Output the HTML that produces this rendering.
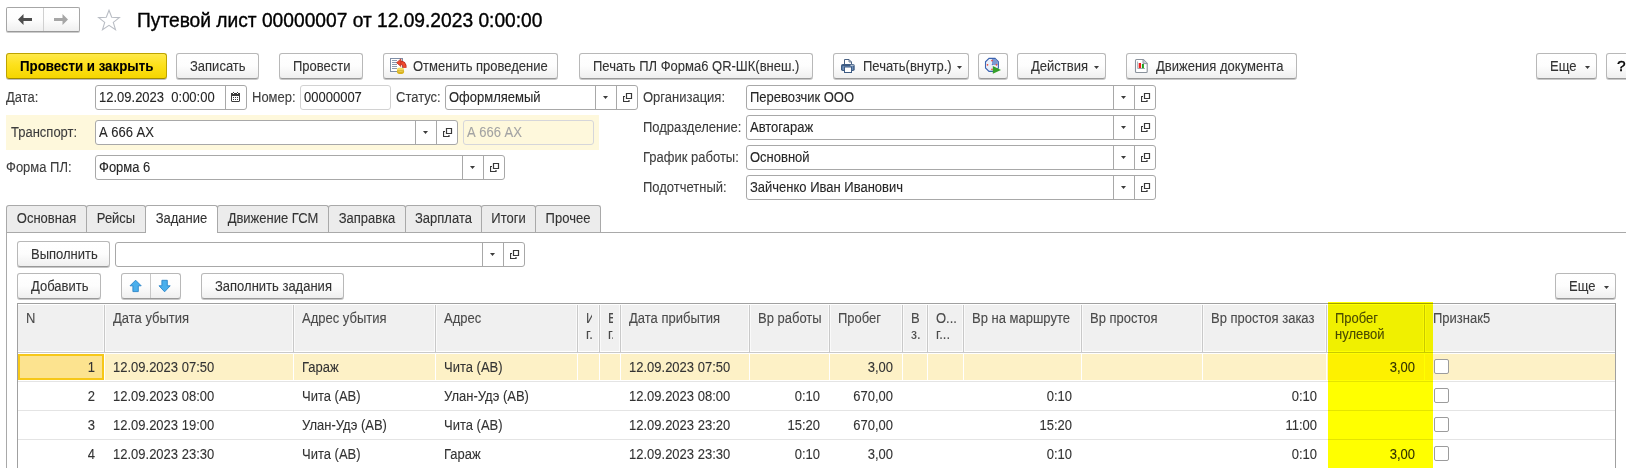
<!DOCTYPE html><html><head><meta charset="utf-8"><style>
html,body{margin:0;padding:0;}
body{width:1626px;height:468px;overflow:hidden;position:relative;background:#fff;font-family:"Liberation Sans", sans-serif;}
.t{position:absolute;white-space:pre;line-height:16px;transform:scaleY(1.08);transform-origin:0 12.5px;-webkit-text-stroke:0.1px currentColor;}
.btn{position:absolute;border:1px solid #b8b8b8;border-bottom-color:#999;border-radius:3px;background:linear-gradient(#ffffff 0%,#fdfdfd 50%,#efefef 100%);box-shadow:0 1px 0 rgba(0,0,0,0.22);}
.ybtn{position:absolute;border:1px solid #bda300;border-bottom-color:#a08a00;border-radius:3px;background:linear-gradient(#ffe94a 0%,#fde11c 45%,#f5d600 100%);box-shadow:0 1px 0 rgba(0,0,0,0.25);}
.fld{position:absolute;border:1px solid #a8a8a8;border-radius:3px;background:#fff;}
.vl{position:absolute;width:1px;background:#a8a8a8;}
.arr{position:absolute;width:0;height:0;border-left:3px solid transparent;border-right:3px solid transparent;border-top:4px solid #444;}
.ic{position:absolute;}
.abs{position:absolute;}
</style></head><body>
<div class="btn" style="left:6px;top:7px;width:72px;height:23px;border-color:#a6a6a6;border-bottom-color:#999;border-radius:2px;box-shadow:0 1px 0 rgba(0,0,0,0.2)"></div><div class="vl" style="left:43px;top:8px;height:23px;background:#d0d0d0"></div><svg class="ic" style="left:18px;top:14px" width="15" height="11" viewBox="0 0 15 11"><path d="M0 5.5L5.5 0V4H14V7H5.5V11Z" fill="#4d4d4d"/></svg><svg class="ic" style="left:53px;top:14px" width="15" height="11" viewBox="0 0 15 11"><path d="M15 5.5L9.5 0V4H1V7H9.5V11Z" fill="#a6a6a6"/></svg><svg class="ic" style="left:97px;top:9px" width="24" height="23" viewBox="0 0 24 23"><path d="M12 1.3L14.7 8.3L22.4 8.6L16.3 13.4L18.5 20.6L12 16.4L5.5 20.6L7.7 13.4L1.6 8.6L9.3 8.3Z" fill="none" stroke="#b9bdc4" stroke-width="1.1"/></svg><div class="t" style="left:137px;top:11px;font-size:19.2px;color:#000;line-height:20px;-webkit-text-stroke:0.35px #000;transform:scaleY(1.03);transform-origin:0 16px">Путевой лист 00000007 от 12.09.2023 0:00:00</div><div class="ybtn" style="left:6px;top:53px;width:159px;height:24px"></div><div class="t" style="left:20px;top:59px;font-size:13.3px;color:#000;font-weight:bold">Провести и закрыть</div><div class="btn" style="left:176px;top:53px;width:81px;height:24px"></div><div class="t" style="left:190px;top:59px;font-size:13px;color:#333;font-weight:normal;">Записать</div><div class="btn" style="left:279px;top:53px;width:82px;height:24px"></div><div class="t" style="left:293px;top:59px;font-size:13px;color:#333;font-weight:normal;">Провести</div><div class="btn" style="left:383px;top:53px;width:173px;height:24px"></div><div class="t" style="left:413px;top:59px;font-size:13px;color:#333;font-weight:normal;">Отменить проведение</div><div class="btn" style="left:579px;top:53px;width:232px;height:24px"></div><div class="t" style="left:593px;top:59px;font-size:13px;color:#333;font-weight:normal;">Печать ПЛ Форма6 QR-ШК(внеш.)</div><div class="btn" style="left:833px;top:53px;width:134px;height:24px"></div><div class="t" style="left:863px;top:59px;font-size:13px;color:#333;font-weight:normal;">Печать(внутр.)</div><svg class="ic" style="left:957px;top:66px" width="5" height="3" viewBox="0 0 5 3"><path d="M0 0H5L2.5 3Z" fill="#3c3c3c"/></svg><div class="btn" style="left:978px;top:53px;width:28px;height:24px"></div><div class="btn" style="left:1017px;top:53px;width:87px;height:24px"></div><div class="t" style="left:1031px;top:59px;font-size:13px;color:#333;font-weight:normal;">Действия</div><svg class="ic" style="left:1094px;top:66px" width="5" height="3" viewBox="0 0 5 3"><path d="M0 0H5L2.5 3Z" fill="#3c3c3c"/></svg><div class="btn" style="left:1126px;top:53px;width:169px;height:24px"></div><div class="t" style="left:1156px;top:59px;font-size:13px;color:#333;font-weight:normal;">Движения документа</div><div class="btn" style="left:1536px;top:53px;width:59px;height:24px"></div><div class="t" style="left:1550px;top:59px;font-size:13px;color:#333;font-weight:normal;">Еще</div><svg class="ic" style="left:1585px;top:66px" width="5" height="3" viewBox="0 0 5 3"><path d="M0 0H5L2.5 3Z" fill="#3c3c3c"/></svg><div class="btn" style="left:1606px;top:53px;width:33px;height:24px"></div><div class="t" style="left:1617px;top:58px;font-size:15.5px;color:#000;font-weight:normal;transform:none;-webkit-text-stroke:0.4px #000">?</div><svg class="ic" style="left:386px;top:54px" width="24" height="24" viewBox="0 0 24 24">
<rect x="4.5" y="4.5" width="12" height="13" fill="#fff" stroke="#7f8ea6" stroke-width="1"/>
<path d="M6 6.5h5M6 8.5h5M6 10.5h5M6 12.5h5M6 14.5h5" stroke="#8d9bb0" stroke-width="1"/>
<ellipse cx="14.5" cy="17.5" rx="3.6" ry="2.6" fill="#d9b31c"/>
<ellipse cx="14.5" cy="15.8" rx="3.6" ry="2.2" fill="#f3dc63"/>
<path d="M11 16.8h7" stroke="#c9a11a" stroke-width="0.8"/>
<path d="M14 8.6C17.3 8.6 18.6 10 18.6 13.8" fill="none" stroke="#b5281c" stroke-width="4"/>
<path d="M14 8.6C17.3 8.6 18.6 10 18.6 13.8" fill="none" stroke="#f04a2e" stroke-width="2.7"/>
<path d="M10.6 8.7L14.9 4.9V12.5Z" fill="#f04a2e" stroke="#b5281c" stroke-width="0.7"/>
</svg><svg class="ic" style="left:836px;top:54px" width="24" height="24" viewBox="0 0 24 24">
<path d="M8.5 5.5h4.5l2.5 2.5v3h-7z" fill="#fff" stroke="#4a6283" stroke-width="1"/>
<path d="M13 5.5v2.5h2.5" fill="none" stroke="#4a6283" stroke-width="0.8"/>
<rect x="5" y="10" width="13.7" height="7" rx="1.8" fill="#3d5b83"/>
<rect x="6.3" y="12" width="11" height="4" rx="0.8" fill="#6f90ba"/>
<rect x="14.6" y="10.8" width="1.2" height="1" fill="#fff"/><rect x="16.3" y="10.8" width="1.2" height="1" fill="#fff"/>
<rect x="8.5" y="13" width="7" height="5.5" fill="#fff" stroke="#3d5b83" stroke-width="1"/>
</svg><svg class="ic" style="left:980px;top:54px" width="24" height="24" viewBox="0 0 24 24">
<path d="M9 4.4H15L18.4 7.8V14L15 17.4H9L5.5 14V7.8Z" fill="#e9eff9" stroke="#3c63b0" stroke-width="1.1"/>
<path d="M12 5V10.9H17.8V8L14.8 5Z" fill="#7d99d2"/>
<circle cx="12" cy="6.6" r="0.85" fill="#ee4a3a"/><circle cx="7.5" cy="10.8" r="0.85" fill="#ee4a3a"/><circle cx="16.5" cy="10.8" r="0.85" fill="#ee4a3a"/><circle cx="12" cy="15.3" r="0.85" fill="#ee4a3a"/>
<circle cx="12.3" cy="10.6" r="0.6" fill="#4a6fc0"/>
<path d="M12.8 11.9L21 15.9L12.8 19.8Z" fill="#35a02a"/>
</svg><svg class="ic" style="left:1130px;top:54px" width="24" height="24" viewBox="0 0 24 24">
<path d="M6.5 5.5H13.3L17.2 9.4V17.5A1 1 0 0 1 16.2 18.5H6.5A1 1 0 0 1 5.5 17.5V6.5A1 1 0 0 1 6.5 5.5Z" fill="#fff" stroke="#8a929c" stroke-width="1.1"/>
<path d="M13 5.5V9.6H17.2" fill="#c8ced6" stroke="#8a929c" stroke-width="0.9"/>
<path d="M7.6 7.5V14.5H15" fill="none" stroke="#8aa3a8" stroke-width="0.8"/>
<rect x="8.7" y="9" width="2.3" height="5.2" fill="#f01e1e"/>
<rect x="11.9" y="10" width="2" height="4.2" fill="#1e9e1e"/>
</svg><div class="t" style="left:6px;top:90px;font-size:13px;color:#3d3d3d;font-weight:normal;">Дата:</div><div class="fld" style="left:95px;top:85px;width:150px;height:23px;"></div><div class="vl" style="left:225px;top:85px;height:25px"></div><svg class="ic" style="left:229px;top:90px" width="13" height="13" viewBox="0 0 13 13" shape-rendering="crispEdges"><g fill="#3c3c3c">
<rect x="4" y="2" width="1" height="1"/><rect x="8" y="2" width="1" height="1"/>
<rect x="2" y="3" width="2" height="1"/><rect x="5" y="3" width="3" height="1"/><rect x="9" y="3" width="2" height="1"/>
<rect x="2" y="4" width="9" height="2"/>
<rect x="2" y="6" width="1" height="5"/><rect x="10" y="6" width="1" height="5"/><rect x="3" y="11" width="7" height="1"/>
<rect x="4" y="7" width="1" height="1"/><rect x="6" y="7" width="1" height="1"/><rect x="8" y="7" width="1" height="1"/>
<rect x="4" y="9" width="1" height="1"/><rect x="6" y="9" width="1" height="1"/><rect x="8" y="9" width="1" height="1"/>
</g><rect x="2" y="11" width="1" height="1" fill="#9a9a9a"/><rect x="10" y="11" width="1" height="1" fill="#9a9a9a"/></svg><div class="t" style="left:99px;top:90px;font-size:13px;color:#262626;font-weight:normal;">12.09.2023  0:00:00</div><div class="t" style="left:252px;top:90px;font-size:13px;color:#3d3d3d;font-weight:normal;">Номер:</div><div class="fld" style="left:300px;top:85px;width:89px;height:23px;border-color:#d2d2d2"></div><div class="t" style="left:304px;top:90px;font-size:13px;color:#262626;font-weight:normal;">00000007</div><div class="t" style="left:396px;top:90px;font-size:13px;color:#3d3d3d;font-weight:normal;">Статус:</div><div class="fld" style="left:445px;top:85px;width:191px;height:23px;"></div><div class="vl" style="left:595px;top:85px;height:24px"></div><svg class="ic" style="left:603px;top:96px" width="5" height="3" viewBox="0 0 5 3"><path d="M0 0H5L2.5 3Z" fill="#3c3c3c"/></svg><div class="vl" style="left:616px;top:85px;height:24px"></div><svg class="ic" style="left:623px;top:93px" width="10" height="10" viewBox="0 0 10 10"><path d="M3.5 0.5h5v5h-5z" fill="none" stroke="#383838" stroke-width="1.2"/><path d="M2 3.5H0.5V8.5H6V7" fill="none" stroke="#383838" stroke-width="1.2"/></svg><div class="t" style="left:449px;top:90px;font-size:13px;color:#262626;font-weight:normal;">Оформляемый</div><div class="abs" style="left:6px;top:115px;width:593px;height:35px;background:#fef8dc"></div><div class="t" style="left:11px;top:125px;font-size:13px;color:#3d3d3d;font-weight:normal;">Транспорт:</div><div class="fld" style="left:95px;top:120px;width:361px;height:23px;"></div><div class="vl" style="left:415px;top:120px;height:24px"></div><svg class="ic" style="left:423px;top:131px" width="5" height="3" viewBox="0 0 5 3"><path d="M0 0H5L2.5 3Z" fill="#3c3c3c"/></svg><div class="vl" style="left:436px;top:120px;height:24px"></div><svg class="ic" style="left:443px;top:128px" width="10" height="10" viewBox="0 0 10 10"><path d="M3.5 0.5h5v5h-5z" fill="none" stroke="#383838" stroke-width="1.2"/><path d="M2 3.5H0.5V8.5H6V7" fill="none" stroke="#383838" stroke-width="1.2"/></svg><div class="t" style="left:99px;top:125px;font-size:13px;color:#262626;font-weight:normal;">А 666 АХ</div><div class="fld" style="left:463px;top:120px;width:129px;height:23px;border-color:#d6d6da;background:#fef8dc"></div><div class="t" style="left:467px;top:125px;font-size:13px;color:#a3a3a3;font-weight:normal;">А 666 АХ</div><div class="t" style="left:6px;top:160px;font-size:13px;color:#3d3d3d;font-weight:normal;">Форма ПЛ:</div><div class="fld" style="left:95px;top:155px;width:408px;height:23px;"></div><div class="vl" style="left:462px;top:155px;height:24px"></div><svg class="ic" style="left:470px;top:166px" width="5" height="3" viewBox="0 0 5 3"><path d="M0 0H5L2.5 3Z" fill="#3c3c3c"/></svg><div class="vl" style="left:483px;top:155px;height:24px"></div><svg class="ic" style="left:490px;top:163px" width="10" height="10" viewBox="0 0 10 10"><path d="M3.5 0.5h5v5h-5z" fill="none" stroke="#383838" stroke-width="1.2"/><path d="M2 3.5H0.5V8.5H6V7" fill="none" stroke="#383838" stroke-width="1.2"/></svg><div class="t" style="left:99px;top:160px;font-size:13px;color:#262626;font-weight:normal;">Форма 6</div><div class="t" style="left:643px;top:90px;font-size:13px;color:#3d3d3d;font-weight:normal;">Организация:</div><div class="fld" style="left:746px;top:85px;width:408px;height:23px;"></div><div class="vl" style="left:1113px;top:85px;height:24px"></div><svg class="ic" style="left:1121px;top:96px" width="5" height="3" viewBox="0 0 5 3"><path d="M0 0H5L2.5 3Z" fill="#3c3c3c"/></svg><div class="vl" style="left:1134px;top:85px;height:24px"></div><svg class="ic" style="left:1141px;top:93px" width="10" height="10" viewBox="0 0 10 10"><path d="M3.5 0.5h5v5h-5z" fill="none" stroke="#383838" stroke-width="1.2"/><path d="M2 3.5H0.5V8.5H6V7" fill="none" stroke="#383838" stroke-width="1.2"/></svg><div class="t" style="left:750px;top:90px;font-size:13px;color:#262626;font-weight:normal;">Перевозчик ООО</div><div class="t" style="left:643px;top:120px;font-size:13px;color:#3d3d3d;font-weight:normal;">Подразделение:</div><div class="fld" style="left:746px;top:115px;width:408px;height:23px;"></div><div class="vl" style="left:1113px;top:115px;height:24px"></div><svg class="ic" style="left:1121px;top:126px" width="5" height="3" viewBox="0 0 5 3"><path d="M0 0H5L2.5 3Z" fill="#3c3c3c"/></svg><div class="vl" style="left:1134px;top:115px;height:24px"></div><svg class="ic" style="left:1141px;top:123px" width="10" height="10" viewBox="0 0 10 10"><path d="M3.5 0.5h5v5h-5z" fill="none" stroke="#383838" stroke-width="1.2"/><path d="M2 3.5H0.5V8.5H6V7" fill="none" stroke="#383838" stroke-width="1.2"/></svg><div class="t" style="left:750px;top:120px;font-size:13px;color:#262626;font-weight:normal;">Автогараж</div><div class="t" style="left:643px;top:150px;font-size:13px;color:#3d3d3d;font-weight:normal;">График работы:</div><div class="fld" style="left:746px;top:145px;width:408px;height:23px;"></div><div class="vl" style="left:1113px;top:145px;height:24px"></div><svg class="ic" style="left:1121px;top:156px" width="5" height="3" viewBox="0 0 5 3"><path d="M0 0H5L2.5 3Z" fill="#3c3c3c"/></svg><div class="vl" style="left:1134px;top:145px;height:24px"></div><svg class="ic" style="left:1141px;top:153px" width="10" height="10" viewBox="0 0 10 10"><path d="M3.5 0.5h5v5h-5z" fill="none" stroke="#383838" stroke-width="1.2"/><path d="M2 3.5H0.5V8.5H6V7" fill="none" stroke="#383838" stroke-width="1.2"/></svg><div class="t" style="left:750px;top:150px;font-size:13px;color:#262626;font-weight:normal;">Основной</div><div class="t" style="left:643px;top:180px;font-size:13px;color:#3d3d3d;font-weight:normal;">Подотчетный:</div><div class="fld" style="left:746px;top:175px;width:408px;height:23px;"></div><div class="vl" style="left:1113px;top:175px;height:24px"></div><svg class="ic" style="left:1121px;top:186px" width="5" height="3" viewBox="0 0 5 3"><path d="M0 0H5L2.5 3Z" fill="#3c3c3c"/></svg><div class="vl" style="left:1134px;top:175px;height:24px"></div><svg class="ic" style="left:1141px;top:183px" width="10" height="10" viewBox="0 0 10 10"><path d="M3.5 0.5h5v5h-5z" fill="none" stroke="#383838" stroke-width="1.2"/><path d="M2 3.5H0.5V8.5H6V7" fill="none" stroke="#383838" stroke-width="1.2"/></svg><div class="t" style="left:750px;top:180px;font-size:13px;color:#262626;font-weight:normal;">Зайченко Иван Иванович</div><div class="abs" style="left:6px;top:232px;width:1620px;height:1px;background:#a9a9a9"></div><div class="abs" style="left:6px;top:232px;width:1px;height:236px;background:#a9a9a9"></div><div class="abs" style="left:6px;top:205px;width:79px;height:26px;background:#ececec;border:1px solid #a9a9a9;border-bottom:none;border-radius:3px 3px 0 0"></div><div class="t" style="left:16.8125px;top:211px;font-size:13px;color:#333;font-weight:normal;">Основная</div><div class="abs" style="left:86px;top:205px;width:58px;height:26px;background:#ececec;border:1px solid #a9a9a9;border-bottom:none;border-radius:3px 3px 0 0"></div><div class="t" style="left:96.78125px;top:211px;font-size:13px;color:#333;font-weight:normal;">Рейсы</div><div class="abs" style="left:145px;top:205px;width:71px;height:27px;background:#fff;border:1px solid #a9a9a9;border-bottom:none;border-radius:3px 3px 0 0"></div><div class="t" style="left:155.7109375px;top:211px;font-size:13px;color:#333;font-weight:normal;">Задание</div><div class="abs" style="left:217px;top:205px;width:110px;height:26px;background:#ececec;border:1px solid #a9a9a9;border-bottom:none;border-radius:3px 3px 0 0"></div><div class="t" style="left:227.6328125px;top:211px;font-size:13px;color:#333;font-weight:normal;">Движение ГСМ</div><div class="abs" style="left:328px;top:205px;width:76px;height:26px;background:#ececec;border:1px solid #a9a9a9;border-bottom:none;border-radius:3px 3px 0 0"></div><div class="t" style="left:338.640625px;top:211px;font-size:13px;color:#333;font-weight:normal;">Заправка</div><div class="abs" style="left:405px;top:205px;width:75px;height:26px;background:#ececec;border:1px solid #a9a9a9;border-bottom:none;border-radius:3px 3px 0 0"></div><div class="t" style="left:415.0234375px;top:211px;font-size:13px;color:#333;font-weight:normal;">Зарплата</div><div class="abs" style="left:481px;top:205px;width:53px;height:26px;background:#ececec;border:1px solid #a9a9a9;border-bottom:none;border-radius:3px 3px 0 0"></div><div class="t" style="left:491.3046875px;top:211px;font-size:13px;color:#333;font-weight:normal;">Итоги</div><div class="abs" style="left:535px;top:205px;width:64px;height:26px;background:#ececec;border:1px solid #a9a9a9;border-bottom:none;border-radius:3px 3px 0 0"></div><div class="t" style="left:545.6171875px;top:211px;font-size:13px;color:#333;font-weight:normal;">Прочее</div><div class="btn" style="left:17px;top:241px;width:91px;height:24px"></div><div class="t" style="left:31px;top:247px;font-size:13px;color:#333;font-weight:normal;">Выполнить</div><div class="fld" style="left:115px;top:242px;width:408px;height:23px;"></div><div class="vl" style="left:482px;top:242px;height:24px"></div><svg class="ic" style="left:490px;top:253px" width="5" height="3" viewBox="0 0 5 3"><path d="M0 0H5L2.5 3Z" fill="#3c3c3c"/></svg><div class="vl" style="left:503px;top:242px;height:24px"></div><svg class="ic" style="left:510px;top:250px" width="10" height="10" viewBox="0 0 10 10"><path d="M3.5 0.5h5v5h-5z" fill="none" stroke="#383838" stroke-width="1.2"/><path d="M2 3.5H0.5V8.5H6V7" fill="none" stroke="#383838" stroke-width="1.2"/></svg><div class="btn" style="left:17px;top:273px;width:82px;height:24px"></div><div class="t" style="left:31px;top:279px;font-size:13px;color:#333;font-weight:normal;">Добавить</div><div class="btn" style="left:121px;top:273px;width:58px;height:24px"></div><div class="vl" style="left:150px;top:274px;height:24px;background:#c8c8c8"></div><svg class="ic" style="left:129px;top:279px" width="14" height="14" viewBox="0 0 14 14"><path d="M6.6 1.2L12.2 6.8H9.3V12.6H3.9V6.8H1Z" fill="#4aafec" stroke="#2a85c8" stroke-width="0.9" stroke-linejoin="miter"/></svg><svg class="ic" style="left:158px;top:279px" width="14" height="14" viewBox="0 0 14 14"><path d="M6.6 12.8L12.2 6.8H9.3V1.3H3.9V6.8H1Z" fill="#4aafec" stroke="#2a85c8" stroke-width="0.9" stroke-linejoin="miter"/></svg><div class="btn" style="left:201px;top:273px;width:141px;height:24px"></div><div class="t" style="left:215px;top:279px;font-size:13px;color:#333;font-weight:normal;">Заполнить задания</div><div class="btn" style="left:1555px;top:273px;width:59px;height:24px"></div><div class="t" style="left:1569px;top:279px;font-size:13px;color:#333;font-weight:normal;">Еще</div><svg class="ic" style="left:1604px;top:286px" width="5" height="3" viewBox="0 0 5 3"><path d="M0 0H5L2.5 3Z" fill="#3c3c3c"/></svg><div class="abs" style="left:17px;top:303px;width:1597px;height:170px;border:1px solid #a0a0a0;background:#fff"></div><div class="abs" style="left:18px;top:305px;width:1597px;height:46px;background:#f0f0f0;"></div><div class="abs" style="left:18px;top:352px;width:1597px;height:1px;background:#c9c9c9;"></div><div class="abs" style="left:103px;top:305px;width:1px;height:46px;background:#fafafa;"></div><div class="abs" style="left:105px;top:305px;width:1px;height:46px;background:#fafafa;"></div><div class="abs" style="left:104px;top:305px;width:1px;height:47px;background:#c9c9c9;"></div><div class="abs" style="left:292px;top:305px;width:1px;height:46px;background:#fafafa;"></div><div class="abs" style="left:294px;top:305px;width:1px;height:46px;background:#fafafa;"></div><div class="abs" style="left:293px;top:305px;width:1px;height:47px;background:#c9c9c9;"></div><div class="abs" style="left:434px;top:305px;width:1px;height:46px;background:#fafafa;"></div><div class="abs" style="left:436px;top:305px;width:1px;height:46px;background:#fafafa;"></div><div class="abs" style="left:435px;top:305px;width:1px;height:47px;background:#c9c9c9;"></div><div class="abs" style="left:576px;top:305px;width:1px;height:46px;background:#fafafa;"></div><div class="abs" style="left:578px;top:305px;width:1px;height:46px;background:#fafafa;"></div><div class="abs" style="left:577px;top:305px;width:1px;height:47px;background:#c9c9c9;"></div><div class="abs" style="left:598px;top:305px;width:1px;height:46px;background:#fafafa;"></div><div class="abs" style="left:600px;top:305px;width:1px;height:46px;background:#fafafa;"></div><div class="abs" style="left:599px;top:305px;width:1px;height:47px;background:#c9c9c9;"></div><div class="abs" style="left:619px;top:305px;width:1px;height:46px;background:#fafafa;"></div><div class="abs" style="left:621px;top:305px;width:1px;height:46px;background:#fafafa;"></div><div class="abs" style="left:620px;top:305px;width:1px;height:47px;background:#c9c9c9;"></div><div class="abs" style="left:748px;top:305px;width:1px;height:46px;background:#fafafa;"></div><div class="abs" style="left:750px;top:305px;width:1px;height:46px;background:#fafafa;"></div><div class="abs" style="left:749px;top:305px;width:1px;height:47px;background:#c9c9c9;"></div><div class="abs" style="left:828px;top:305px;width:1px;height:46px;background:#fafafa;"></div><div class="abs" style="left:830px;top:305px;width:1px;height:46px;background:#fafafa;"></div><div class="abs" style="left:829px;top:305px;width:1px;height:47px;background:#c9c9c9;"></div><div class="abs" style="left:901px;top:305px;width:1px;height:46px;background:#fafafa;"></div><div class="abs" style="left:903px;top:305px;width:1px;height:46px;background:#fafafa;"></div><div class="abs" style="left:902px;top:305px;width:1px;height:47px;background:#c9c9c9;"></div><div class="abs" style="left:926px;top:305px;width:1px;height:46px;background:#fafafa;"></div><div class="abs" style="left:928px;top:305px;width:1px;height:46px;background:#fafafa;"></div><div class="abs" style="left:927px;top:305px;width:1px;height:47px;background:#c9c9c9;"></div><div class="abs" style="left:962px;top:305px;width:1px;height:46px;background:#fafafa;"></div><div class="abs" style="left:964px;top:305px;width:1px;height:46px;background:#fafafa;"></div><div class="abs" style="left:963px;top:305px;width:1px;height:47px;background:#c9c9c9;"></div><div class="abs" style="left:1080px;top:305px;width:1px;height:46px;background:#fafafa;"></div><div class="abs" style="left:1082px;top:305px;width:1px;height:46px;background:#fafafa;"></div><div class="abs" style="left:1081px;top:305px;width:1px;height:47px;background:#c9c9c9;"></div><div class="abs" style="left:1201px;top:305px;width:1px;height:46px;background:#fafafa;"></div><div class="abs" style="left:1203px;top:305px;width:1px;height:46px;background:#fafafa;"></div><div class="abs" style="left:1202px;top:305px;width:1px;height:47px;background:#c9c9c9;"></div><div class="abs" style="left:1325px;top:305px;width:1px;height:46px;background:#fafafa;"></div><div class="abs" style="left:1327px;top:305px;width:1px;height:46px;background:#fafafa;"></div><div class="abs" style="left:1326px;top:305px;width:1px;height:47px;background:#c9c9c9;"></div><div class="abs" style="left:1423px;top:305px;width:1px;height:46px;background:#fafafa;"></div><div class="abs" style="left:1425px;top:305px;width:1px;height:46px;background:#fafafa;"></div><div class="abs" style="left:1424px;top:305px;width:1px;height:47px;background:#c9c9c9;"></div><div class="t" style="left:26px;top:311px;font-size:13px;color:#4a4a4a;font-weight:normal;overflow:hidden;">N</div><div class="t" style="left:113px;top:311px;font-size:13px;color:#4a4a4a;font-weight:normal;overflow:hidden;">Дата убытия</div><div class="t" style="left:302px;top:311px;font-size:13px;color:#4a4a4a;font-weight:normal;overflow:hidden;">Адрес убытия</div><div class="t" style="left:444px;top:311px;font-size:13px;color:#4a4a4a;font-weight:normal;overflow:hidden;">Адрес</div><div class="t" style="left:586px;top:311px;font-size:13px;color:#4a4a4a;font-weight:normal;overflow:hidden;width:6px;">И</div><div class="t" style="left:586px;top:327px;font-size:13px;color:#4a4a4a;font-weight:normal;overflow:hidden;width:6px;">г.</div><div class="t" style="left:608px;top:311px;font-size:13px;color:#4a4a4a;font-weight:normal;overflow:hidden;width:5px;">Е</div><div class="t" style="left:608px;top:327px;font-size:13px;color:#4a4a4a;font-weight:normal;overflow:hidden;width:5px;">г.</div><div class="t" style="left:629px;top:311px;font-size:13px;color:#4a4a4a;font-weight:normal;overflow:hidden;">Дата прибытия</div><div class="t" style="left:758px;top:311px;font-size:13px;color:#4a4a4a;font-weight:normal;overflow:hidden;">Вр работы</div><div class="t" style="left:838px;top:311px;font-size:13px;color:#4a4a4a;font-weight:normal;overflow:hidden;">Пробег</div><div class="t" style="left:911px;top:311px;font-size:13px;color:#4a4a4a;font-weight:normal;overflow:hidden;">В</div><div class="t" style="left:911px;top:327px;font-size:13px;color:#4a4a4a;font-weight:normal;overflow:hidden;">з.</div><div class="t" style="left:936px;top:311px;font-size:13px;color:#4a4a4a;font-weight:normal;overflow:hidden;">О...</div><div class="t" style="left:936px;top:327px;font-size:13px;color:#4a4a4a;font-weight:normal;overflow:hidden;">г...</div><div class="t" style="left:972px;top:311px;font-size:13px;color:#4a4a4a;font-weight:normal;overflow:hidden;">Вр на маршруте</div><div class="t" style="left:1090px;top:311px;font-size:13px;color:#4a4a4a;font-weight:normal;overflow:hidden;">Вр простоя</div><div class="t" style="left:1211px;top:311px;font-size:13px;color:#4a4a4a;font-weight:normal;overflow:hidden;">Вр простоя заказ</div><div class="t" style="left:1335px;top:311px;font-size:13px;color:#4a4a4a;font-weight:normal;overflow:hidden;">Пробег</div><div class="t" style="left:1335px;top:327px;font-size:13px;color:#4a4a4a;font-weight:normal;overflow:hidden;">нулевой</div><div class="t" style="left:1433px;top:311px;font-size:13px;color:#4a4a4a;font-weight:normal;overflow:hidden;">Признак5</div><div class="abs" style="left:18px;top:354px;width:1597px;height:26px;background:#fdf1c6;"></div><div class="abs" style="left:104px;top:354px;width:1px;height:26px;background:#fff;"></div><div class="abs" style="left:293px;top:354px;width:1px;height:26px;background:#fff;"></div><div class="abs" style="left:435px;top:354px;width:1px;height:26px;background:#fff;"></div><div class="abs" style="left:577px;top:354px;width:1px;height:26px;background:#fff;"></div><div class="abs" style="left:599px;top:354px;width:1px;height:26px;background:#fff;"></div><div class="abs" style="left:620px;top:354px;width:1px;height:26px;background:#fff;"></div><div class="abs" style="left:749px;top:354px;width:1px;height:26px;background:#fff;"></div><div class="abs" style="left:829px;top:354px;width:1px;height:26px;background:#fff;"></div><div class="abs" style="left:902px;top:354px;width:1px;height:26px;background:#fff;"></div><div class="abs" style="left:927px;top:354px;width:1px;height:26px;background:#fff;"></div><div class="abs" style="left:963px;top:354px;width:1px;height:26px;background:#fff;"></div><div class="abs" style="left:1081px;top:354px;width:1px;height:26px;background:#fff;"></div><div class="abs" style="left:1202px;top:354px;width:1px;height:26px;background:#fff;"></div><div class="abs" style="left:1326px;top:354px;width:1px;height:26px;background:#fff;"></div><div class="abs" style="left:1424px;top:354px;width:1px;height:26px;background:#fff;"></div><div class="abs" style="left:18px;top:354px;width:82px;height:22px;border:2px solid #f6c718;background:#fce38f"></div><div class="abs" style="left:18px;top:381px;width:1597px;height:1px;background:#e4e4e4;"></div><div class="t" style="right:1531px;top:360px;font-size:13px;color:#333;font-weight:normal;">1</div><div class="t" style="left:113px;top:360px;font-size:13px;color:#333;font-weight:normal;">12.09.2023 07:50</div><div class="t" style="left:302px;top:360px;font-size:13px;color:#333;font-weight:normal;">Гараж</div><div class="t" style="left:444px;top:360px;font-size:13px;color:#333;font-weight:normal;">Чита (АВ)</div><div class="t" style="left:629px;top:360px;font-size:13px;color:#333;font-weight:normal;">12.09.2023 07:50</div><div class="t" style="right:733px;top:360px;font-size:13px;color:#333;font-weight:normal;">3,00</div><div class="t" style="right:211px;top:360px;font-size:13px;color:#333;font-weight:normal;">3,00</div><div class="abs" style="left:1434px;top:359px;width:13px;height:13px;border:1px solid #9c9c9c;border-radius:2px;background:#fff"></div><div class="abs" style="left:18px;top:410px;width:1597px;height:1px;background:#e4e4e4;"></div><div class="t" style="right:1531px;top:389px;font-size:13px;color:#333;font-weight:normal;">2</div><div class="t" style="left:113px;top:389px;font-size:13px;color:#333;font-weight:normal;">12.09.2023 08:00</div><div class="t" style="left:302px;top:389px;font-size:13px;color:#333;font-weight:normal;">Чита (АВ)</div><div class="t" style="left:444px;top:389px;font-size:13px;color:#333;font-weight:normal;">Улан-Удэ (АВ)</div><div class="t" style="left:629px;top:389px;font-size:13px;color:#333;font-weight:normal;">12.09.2023 08:00</div><div class="t" style="right:806px;top:389px;font-size:13px;color:#333;font-weight:normal;">0:10</div><div class="t" style="right:733px;top:389px;font-size:13px;color:#333;font-weight:normal;">670,00</div><div class="t" style="right:554px;top:389px;font-size:13px;color:#333;font-weight:normal;">0:10</div><div class="t" style="right:309px;top:389px;font-size:13px;color:#333;font-weight:normal;">0:10</div><div class="abs" style="left:1434px;top:388px;width:13px;height:13px;border:1px solid #9c9c9c;border-radius:2px;background:#fff"></div><div class="abs" style="left:18px;top:439px;width:1597px;height:1px;background:#e4e4e4;"></div><div class="t" style="right:1531px;top:418px;font-size:13px;color:#333;font-weight:normal;">3</div><div class="t" style="left:113px;top:418px;font-size:13px;color:#333;font-weight:normal;">12.09.2023 19:00</div><div class="t" style="left:302px;top:418px;font-size:13px;color:#333;font-weight:normal;">Улан-Удэ (АВ)</div><div class="t" style="left:444px;top:418px;font-size:13px;color:#333;font-weight:normal;">Чита (АВ)</div><div class="t" style="left:629px;top:418px;font-size:13px;color:#333;font-weight:normal;">12.09.2023 23:20</div><div class="t" style="right:806px;top:418px;font-size:13px;color:#333;font-weight:normal;">15:20</div><div class="t" style="right:733px;top:418px;font-size:13px;color:#333;font-weight:normal;">670,00</div><div class="t" style="right:554px;top:418px;font-size:13px;color:#333;font-weight:normal;">15:20</div><div class="t" style="right:309px;top:418px;font-size:13px;color:#333;font-weight:normal;">11:00</div><div class="abs" style="left:1434px;top:417px;width:13px;height:13px;border:1px solid #9c9c9c;border-radius:2px;background:#fff"></div><div class="abs" style="left:18px;top:468px;width:1597px;height:1px;background:#e4e4e4;"></div><div class="t" style="right:1531px;top:447px;font-size:13px;color:#333;font-weight:normal;">4</div><div class="t" style="left:113px;top:447px;font-size:13px;color:#333;font-weight:normal;">12.09.2023 23:30</div><div class="t" style="left:302px;top:447px;font-size:13px;color:#333;font-weight:normal;">Чита (АВ)</div><div class="t" style="left:444px;top:447px;font-size:13px;color:#333;font-weight:normal;">Гараж</div><div class="t" style="left:629px;top:447px;font-size:13px;color:#333;font-weight:normal;">12.09.2023 23:30</div><div class="t" style="right:806px;top:447px;font-size:13px;color:#333;font-weight:normal;">0:10</div><div class="t" style="right:733px;top:447px;font-size:13px;color:#333;font-weight:normal;">3,00</div><div class="t" style="right:554px;top:447px;font-size:13px;color:#333;font-weight:normal;">0:10</div><div class="t" style="right:309px;top:447px;font-size:13px;color:#333;font-weight:normal;">0:10</div><div class="t" style="right:211px;top:447px;font-size:13px;color:#333;font-weight:normal;">3,00</div><div class="abs" style="left:1434px;top:446px;width:13px;height:13px;border:1px solid #9c9c9c;border-radius:2px;background:#fff"></div><div class="abs" style="left:1328px;top:302px;width:105px;height:166px;background:#ffff00;mix-blend-mode:multiply"></div>
<!--TABLE-->
</body></html>
